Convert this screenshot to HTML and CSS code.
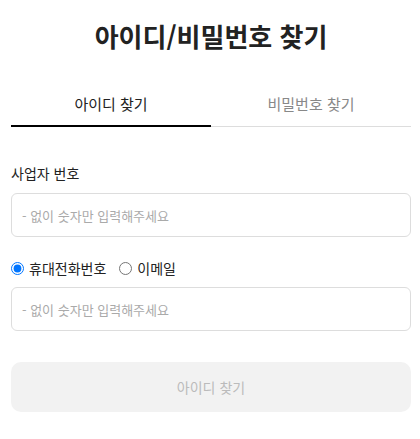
FILE: index.html
```html
<!DOCTYPE html>
<html lang="ko">
<head>
<meta charset="utf-8">
<link rel="stylesheet" href="styles.css">
</head>
<body>
<div class="page">
  <h1 class="title">아이디/비밀번호 찾기</h1>
  <div class="tabs">
    <div class="tab active">아이디 찾기</div>
    <div class="tab">비밀번호 찾기</div>
  </div>
  <div class="field">
    <label class="label">사업자 번호</label>
    <input class="input" type="text" placeholder="- 없이 숫자만 입력해주세요">
  </div>
  <div class="radios">
    <label class="radio"><input type="radio" name="m" checked><span>휴대전화번호</span></label>
    <label class="radio"><input type="radio" name="m"><span>이메일</span></label>
  </div>
  <input class="input" type="text" placeholder="- 없이 숫자만 입력해주세요">
  <button class="submit" type="button">아이디 찾기</button>
</div>
</body>
</html>
```
FILE: styles.css
```css
* { box-sizing: border-box; }
html, body { margin: 0; padding: 0; background: #fff; }
body {
  font-family: "Noto Sans CJK KR", "Noto Sans", sans-serif;
  color: #222;
}
.page {
  padding: 14px 9px 0 11px;
  display: flex;
  flex-direction: column;
}
.title {
  margin: 0;
  text-align: center;
  font-size: 26px;
  font-weight: 700;
  line-height: 44px;
  color: #222;
}
.tabs {
  display: flex;
  margin-top: 35px;
}
.tab {
  flex: 1;
  text-align: center;
  font-size: 15px;
  line-height: 22px;
  padding-bottom: 11px;
  color: #888;
  border-bottom: 1px solid #ddd;
}
.tab.active {
  color: #222;
  border-bottom: 2px solid #000;
  padding-bottom: 10px;
}
.field {
  display: flex;
  flex-direction: column;
  margin-top: 36px;
}
.label {
  font-size: 14px;
  line-height: 20px;
  color: #222;
  margin-bottom: 10px;
}
.input {
  width: 100%;
  height: 44px;
  border: 1px solid #ddd;
  border-radius: 6px;
  padding: 0 10px;
  font-family: inherit;
  font-size: 13px;
  color: #222;
  outline: none;
}
.input::placeholder { color: #aaa; }
.radios {
  display: flex;
  gap: 13px;
  margin: 21px 0 9px;
}
.radio {
  display: flex;
  align-items: center;
  gap: 5px;
  font-size: 14px;
  line-height: 20px;
  color: #222;
}
.radio input {
  margin: 0;
  width: 13px;
  height: 13px;
}
.submit {
  margin-top: 31px;
  height: 50px;
  width: 100%;
  border: none;
  border-radius: 10px;
  background: #f2f2f2;
  color: #bbb;
  font-family: inherit;
  font-size: 14px;
}
```
